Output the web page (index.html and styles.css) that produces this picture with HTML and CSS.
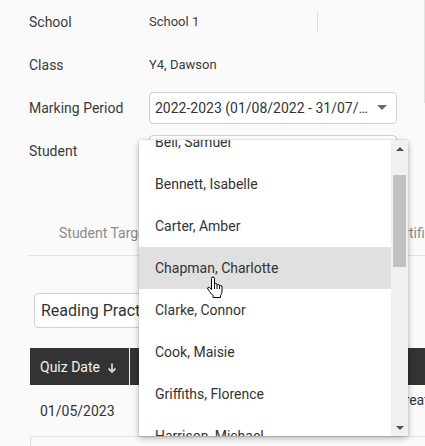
FILE: index.html
```html
<!DOCTYPE html>
<html>
<head>
<meta charset="utf-8">
<link rel="stylesheet" href="styles.css">
</head>
<body>
<div class="page">
  <div class="top">
    <div class="form">
      <div class="row">
        <div class="label">School</div>
        <div class="value value-sep">School 1</div>
      </div>
      <div class="row">
        <div class="label">Class</div>
        <div class="value">Y4, Dawson</div>
      </div>
      <div class="row">
        <div class="label">Marking Period</div>
        <div class="select">
          <span class="select-text">2022-2023 (01/08/2022 - 31/07/2023)</span>
          <span class="caret"></span>
        </div>
      </div>
      <div class="row">
        <div class="label">Student</div>
        <div class="select"><span class="select-text"></span><span class="caret"></span></div>
      </div>
    </div>
    <div class="side-rule"></div>
  </div>

  <div class="tabs">
    <div class="tab">Student Targets</div>
    <div class="tab">Certificates</div>
  </div>

  <div class="filter">Reading Practice</div>

  <div class="table">
    <div class="thead">
      <div class="th c1">Quiz Date
        <svg class="sort" width="12" height="12" viewBox="0 0 12 12"><path d="M6 1.5V10M2.5 6.5L6 10l3.5-3.5" fill="none" stroke="#d0d0d0" stroke-width="1.8"/></svg>
      </div>
      <div class="th c2">Book Title</div>
      <div class="th c3"></div>
    </div>
    <div class="tr">
      <div class="td c1">01/05/2023</div>
      <div class="td c2"></div>
      <div class="td c3 top-al">Great Expectations</div>
    </div>
    <div class="tr tr-next"></div>
  </div>
</div>

<div class="dropdown">
  <div class="list">
    <div class="items">
      <div class="item">Bell, Samuel</div>
      <div class="item">Bennett, Isabelle</div>
      <div class="item">Carter, Amber</div>
      <div class="item hover">Chapman, Charlotte</div>
      <div class="item">Clarke, Connor</div>
      <div class="item">Cook, Maisie</div>
      <div class="item">Griffiths, Florence</div>
      <div class="item">Harrison, Michael</div>
    </div>
  </div>
  <div class="scrollbar">
    <div class="sb-btn"><span class="tri-up"></span></div>
    <div class="thumb"></div>
    <div class="sb-fill"></div>
    <div class="sb-btn"><span class="tri-down"></span></div>
  </div>
</div>

<svg class="cursor" width="18" height="23" viewBox="0 0 18 23">
  <path d="M5.5 2.5Q5.5 1 7 1Q8.5 1 8.5 2.5V8.5Q8.5 7.5 9.8 7.5Q11 7.5 11 8.8V9.5Q11 8.5 12.3 8.5Q13.5 8.5 13.5 9.8V10.5Q13.5 9.5 14.8 9.5Q16 9.5 16 11V15Q16 18 14.5 19.5V21.5H7V19.5Q5 17.5 3.5 15.5L1.8 13Q1.2 11.8 2.3 11.3Q3.3 10.9 4.2 12L5.5 13.5Z" fill="#fff" stroke="#000" stroke-width="1" stroke-linejoin="round"/>
  <path d="M8.5 8.5V13M11 9.5V13M13.5 10.5V13" fill="none" stroke="#000" stroke-width="0.9"/>
</svg>
</body>
</html>
```

FILE: styles.css
```css
html, body {
  margin: 0;
  padding: 0;
}
body {
  width: 425px;
  height: 446px;
  overflow: hidden;
  background: #fafafa;
  font-family: Roboto, "Liberation Sans", sans-serif;
  color: #333;
  position: relative;
}
.page {
  width: 425px;
}
.top {
  display: flex;
  align-items: flex-start;
}
.form {
  flex: 1;
  padding-left: 29px;
}
.side-rule {
  width: 1px;
  height: 103px;
  background: #e3e3e3;
}
.row {
  display: flex;
  align-items: center;
  height: 43px;
}
.label {
  width: 120px;
  font-size: 14px;
  color: #3a3a3a;
}
.value {
  font-size: 13px;
  color: #3c3c3c;
}
.value-sep {
  width: 168px;
  height: 22px;
  line-height: 22px;
  border-right: 1px solid #dedede;
}
.select {
  box-sizing: border-box;
  width: 248px;
  height: 32px;
  border: 1px solid #cfcfcf;
  border-radius: 4px;
  background: #fff;
  display: flex;
  align-items: center;
  padding: 0 9px 0 5px;
}
.select-text {
  flex: 1;
  min-width: 0;
  white-space: nowrap;
  overflow: hidden;
  text-overflow: ellipsis;
  font-size: 14px;
  color: #333;
}
.caret {
  margin-left: 7px;
  width: 0;
  height: 0;
  border-left: 5px solid transparent;
  border-right: 5px solid transparent;
  border-top: 5px solid #6a6a6a;
}
.tabs {
  margin-top: 39px;
  margin-left: 29px;
  display: flex;
  gap: 170px;
  border-bottom: 1px solid #e2e2e2;
  white-space: nowrap;
}
.tab {
  padding: 12px 30px;
  line-height: 20px;
  font-size: 14px;
  color: #8a8a8a;
}
.filter {
  margin: 37px 0 0 34px;
  width: 270px;
  height: 35px;
  box-sizing: border-box;
  border: 1px solid #d0d0d0;
  border-radius: 4px;
  background: #fff;
  font-size: 16px;
  line-height: 33px;
  padding-left: 6px;
  color: #333;
}
.table {
  margin: 20px 0 0 30px;
}
.thead {
  display: flex;
  background: #333;
  height: 37px;
}
.th {
  color: #f2f2f2;
  font-size: 14px;
  display: flex;
  align-items: center;
  box-sizing: border-box;
  padding-left: 10px;
  white-space: nowrap;
}
.th.c1, .td.c1 {
  width: 100px;
  flex: none;
}
.th.c1 {
  border-right: 1px solid #f0f0f0;
}
.th.c2, .td.c2 {
  width: 255px;
  flex: none;
}
.th.c3, .td.c3 {
  flex: 1;
}
.sort {
  margin-left: 6px;
  margin-top: 2px;
}
.tr {
  display: flex;
  height: 51px;
  border-bottom: 1px solid #e0e0e0;
}
.td {
  box-sizing: border-box;
  padding-left: 10px;
  font-size: 14px;
  color: #333;
  display: flex;
  align-items: center;
  white-space: nowrap;
}
.td.top-al {
  align-items: flex-start;
  padding-top: 5px;
  line-height: 20px;
  color: #2f3340;
}
.tr-next {
  border-left: 1px solid #e0e0e0;
  border-bottom: none;
}
.dropdown {
  position: absolute;
  left: 139px;
  top: 140px;
  width: 269px;
  height: 296px;
  background: #fff;
  border-radius: 2px;
  box-shadow: 0 2px 6px rgba(0, 0, 0, 0.3), 0 0 2px rgba(0, 0, 0, 0.12);
  display: flex;
  overflow: hidden;
}
.list {
  flex: 1;
  overflow: hidden;
}
.items {
  margin-top: -19px;
}
.item {
  height: 42px;
  line-height: 42px;
  padding-left: 16px;
  font-size: 14px;
  color: #333;
  white-space: nowrap;
}
.item.hover {
  background: #e0e0e0;
}
.scrollbar {
  width: 17px;
  background: #f1f1f1;
  display: flex;
  flex-direction: column;
}
.sb-btn {
  height: 17px;
  display: flex;
  align-items: center;
  justify-content: center;
  flex: none;
}
.tri-up {
  width: 0;
  height: 0;
  border-left: 4px solid transparent;
  border-right: 4px solid transparent;
  border-bottom: 4px solid #505050;
}
.tri-down {
  width: 0;
  height: 0;
  border-left: 4px solid transparent;
  border-right: 4px solid transparent;
  border-top: 4px solid #505050;
}
.thumb {
  margin: 18px 2px 0;
  height: 92px;
  background: #c1c1c1;
  flex: none;
}
.sb-fill {
  flex: 1;
}
.cursor {
  position: absolute;
  left: 206px;
  top: 276px;
}
```
